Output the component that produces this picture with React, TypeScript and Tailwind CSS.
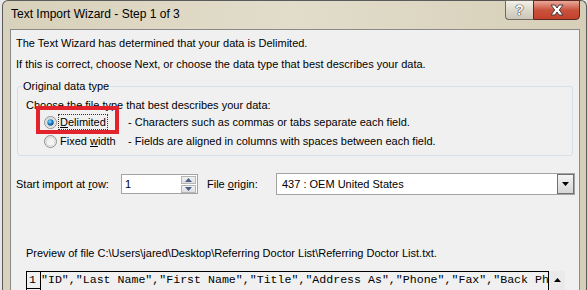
import React from "react";

function Radio({ checked }: { checked?: boolean }) {
  return (
    <svg width="13" height="13" viewBox="0 0 13 13" className="shrink-0">
      <defs>
        <linearGradient id={checked ? "rg1" : "rg2"} x1="0" y1="0" x2="1" y2="1">
          <stop offset="0" stopColor="#e6e6e6" />
          <stop offset="1" stopColor="#ffffff" />
        </linearGradient>
        <radialGradient id="dot" cx="0.4" cy="0.35" r="0.7">
          <stop offset="0" stopColor="#9ee0ff" />
          <stop offset="0.45" stopColor="#2a8fd4" />
          <stop offset="1" stopColor="#0d3f72" />
        </radialGradient>
      </defs>
      <circle cx="6.5" cy="6.5" r="6" fill={`url(#${checked ? "rg1" : "rg2"})`} stroke="#8e8f8f" strokeWidth="1" />
      <circle cx="6.5" cy="6.5" r="4.5" fill="none" stroke="#d2d2d2" strokeWidth="1" />
      {checked && <circle cx="6.5" cy="6.5" r="3.2" fill="url(#dot)" />}
    </svg>
  );
}

export default function App() {
  return (
    <div className="w-[587px] h-[290px] overflow-hidden flex bg-[#ebebeb] font-['Liberation_Sans',Arial,sans-serif] text-black">
      <div className="w-[2px] shrink-0 bg-[#e6e6e6]" />
      <div className="flex-1 flex flex-col border-l border-t border-r border-[#5b5b5b] rounded-t-[6px] bg-linear-to-r from-[#d8d1bb] via-[#e2ddcb] to-[#d6cfb8]">
        {/* title bar */}
        <div className="h-[28px] shrink-0 flex items-start justify-between">
          <div className="pl-[8px] pt-[5px] text-[12px] leading-[16px]">Text Import Wizard - Step 1 of 3</div>
          <div className="flex -mt-[1px] mr-[6px]">
            <div className="w-[28px] h-[20px] border border-[#6d6a62] border-r-0 rounded-bl-[4px] bg-linear-to-b from-[#f3f1ea] via-[#dcd8cc] to-[#cbc6b8] flex items-center justify-center">
              <span className="text-[14px] leading-none font-bold text-white [text-shadow:0_0_1px_#333,0_0_1px_#333,0_0_1px_#333]">?</span>
            </div>
            <div className="w-[47px] h-[20px] border border-[#5a2a22] rounded-br-[4px] bg-linear-to-b from-[#e9a99b] via-[#c9523d] to-[#c4402b] flex items-center justify-center">
              <svg width="16" height="12" viewBox="0 0 16 12">
                <path d="M2 1 H6 L8 4 L10 1 H14 L10.3 6 L14 11 H10 L8 8 L6 11 H2 L5.7 6 Z" fill="#ffffff" stroke="#4a3c3a" strokeWidth="1" strokeLinejoin="round" />
              </svg>
            </div>
          </div>
        </div>
        {/* client */}
        <div className="ml-[7px] w-[570px] flex-1 border border-b-0 border-[#8a8a8a] bg-[#f0f0f0] text-[11px] leading-[15px]">
          <div className="pl-[5px] pt-[6px] flex flex-col">
            <div>The Text Wizard has determined that your data is Delimited.</div>
            <div className="mt-[6px]">If this is correct, choose Next, or choose the data type that best describes your data.</div>
            {/* group box */}
            <div className="relative mt-[14px] ml-[1px] w-[556px] h-[70px] border border-[#d5dfe5] rounded-[3px] pl-[8px] pt-[11px]">
              <span className="absolute -top-[8px] left-[4px] px-[1px] bg-[#f0f0f0]">Original data type</span>
              <div>Choose the file type that best describes your data:</div>
              <div className="h-[19px] flex items-center pl-[18px]">
                <Radio checked />
                <div className="ml-[1px] w-[70px]">
                  <span className="px-[1px] py-[1px] border border-dotted border-[#333]"><u className="underline-offset-[1px]">D</u>elimited</span>
                </div>
                <span>- Characters such as commas or tabs separate each field.</span>
              </div>
              <div className="h-[19px] flex items-center pl-[18px]">
                <Radio />
                <div className="ml-[3px] w-[68px]">
                  Fixed <u className="underline-offset-[1px]">w</u>idth
                </div>
                <span>- Fields are aligned in columns with spaces between each field.</span>
              </div>
              {/* red highlight overlay */}
              <div className="absolute left-[18px] top-[19px] w-[83px] h-[28px] border-[4px] border-[#e2232b]" />
            </div>
            {/* start import row */}
            <div className="mt-[17px] h-[22px] flex items-center">
              <div className="w-[105px]">Start import at <u className="underline-offset-[1px]">r</u>ow:</div>
              <div className="w-[77px] h-[20px] border border-[#a3a3a3] bg-white flex items-center justify-between">
                <span className="pl-[3px]">1</span>
                <div className="flex flex-col gap-[1px] mr-[1px]">
                  <div className="w-[15px] h-[8px] border border-[#b5b5b5] bg-linear-to-b from-[#f2f2f2] to-[#dedede] flex items-center justify-center">
                    <svg width="7" height="4" viewBox="0 0 7 4"><path d="M0 4 L3.5 0 L7 4 Z" fill="#4a5f86" /></svg>
                  </div>
                  <div className="w-[15px] h-[8px] border border-[#b5b5b5] bg-linear-to-b from-[#f2f2f2] to-[#dedede] flex items-center justify-center">
                    <svg width="7" height="4" viewBox="0 0 7 4"><path d="M0 0 L3.5 4 L7 0 Z" fill="#4a5f86" /></svg>
                  </div>
                </div>
              </div>
              <div className="ml-[9px] w-[69px]">File <u className="underline-offset-[1px]">o</u>rigin:</div>
              <div className="w-[299px] h-[22px] border border-[#a3a3a3] bg-white flex items-center justify-between">
                <span className="pl-[5px]">437 : OEM United States</span>
                <div className="w-[17px] h-[20px] border border-[#707070] bg-linear-to-b from-[#f4f4f4] to-[#d6d6d6] flex items-center justify-center">
                  <svg width="7" height="4" viewBox="0 0 7 4"><path d="M0 0 L3.5 4 L7 0 Z" fill="#000" /></svg>
                </div>
              </div>
            </div>
            {/* preview */}
            <div className="mt-[51px] ml-[10px]">Preview of file C:\Users\jared\Desktop\Referring Doctor List\Referring Doctor List.txt.</div>
            <div className="mt-[10px] ml-[10px] flex">
              <div className="w-[523px] flex border-l border-t border-r border-black h-[40px]">
                <div className="w-[14px] border-r border-black shrink-0">
                  <div className="h-[17px] border-b border-black font-['Liberation_Mono',monospace] text-[11.6px] leading-[16px] pl-[2px]">1</div>
                </div>
                <div className="font-['Liberation_Mono',monospace] text-[11.6px] leading-[16px] whitespace-nowrap overflow-hidden">"ID","Last Name","First Name","Title","Address As","Phone","Fax","Back Phone"</div>
              </div>
              <div className="w-[16px] h-[40px] bg-[#eaeaea] flex justify-center pt-[7px]">
                <svg width="7" height="4" viewBox="0 0 7 4"><path d="M0 4 L3.5 0 L7 4 Z" fill="#000" /></svg>
              </div>
            </div>
          </div>
        </div>
      </div>
    </div>
  );
}
